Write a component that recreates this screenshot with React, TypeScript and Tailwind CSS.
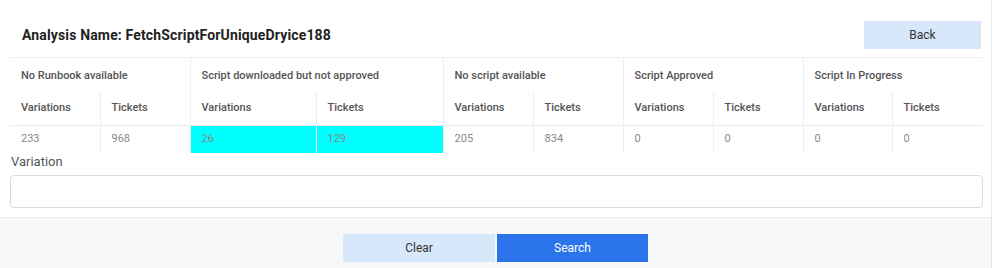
import React from 'react';

type Group = { title: string; variations: number; tickets: number; highlight?: boolean };

const groups: Group[] = [
  { title: 'No Runbook available', variations: 233, tickets: 968 },
  { title: 'Script downloaded but not approved', variations: 26, tickets: 129, highlight: true },
  { title: 'No script available', variations: 205, tickets: 834 },
  { title: 'Script Approved', variations: 0, tickets: 0 },
  { title: 'Script In Progress', variations: 0, tickets: 0 },
];

const colWidths = ['w-[90px]', 'w-[90px]', 'w-[126px]', 'w-[127px]', 'w-[90px]', 'w-[90px]', 'w-[90px]', 'w-[90px]', 'w-[89px]', 'w-[91px]'];

const App: React.FC = () => {
  return (
    <div className="w-[992px] h-[268px] bg-white border-r border-[#e6e8ea] font-['Roboto',sans-serif] flex flex-col overflow-hidden">
      <div className="px-[10px] flex-1">
        <div className="flex items-center justify-between pt-[21px] pb-[8px]">
          <h1 className="pl-[12px] text-[14px] font-bold text-[#222] tracking-[0.15px]">
            Analysis Name: FetchScriptForUniqueDryice188
          </h1>
          <button className="w-[117px] h-[28px] bg-[#d6e8f9] text-[12px] text-[#333]">Back</button>
        </div>

        <table className="w-[973px] border-collapse table-fixed border-t border-[#eceef0]">
          <colgroup>
            {colWidths.map((w, i) => (
              <col key={i} className={w} />
            ))}
          </colgroup>
          <thead>
            <tr className="h-[34px]">
              {groups.map((g, i) => (
                <th
                  key={g.title}
                  colSpan={2}
                  className={`text-left pl-[11px] pt-[2px] text-[11px] font-medium text-[#555] ${i > 0 ? 'border-l border-[#eceef0]' : ''}`}
                >
                  {g.title}
                </th>
              ))}
            </tr>
            <tr className="h-[34px] border-b border-[#e8eaec]">
              {groups.map((g, i) => (
                <React.Fragment key={g.title}>
                  <th className={`text-left pl-[11px] text-[11px] font-medium text-[#555] ${i > 0 ? 'border-l border-[#eceef0]' : ''}`}>
                    Variations
                  </th>
                  <th className="text-left pl-[11px] text-[11px] font-medium text-[#555] border-l border-[#eceef0]">
                    Tickets
                  </th>
                </React.Fragment>
              ))}
            </tr>
          </thead>
          <tbody>
            <tr className="h-[27px]">
              {groups.map((g, i) => (
                <React.Fragment key={g.title}>
                  <td
                    className={`pl-[11px] text-[11px] text-[#888] ${g.highlight ? 'bg-[#00ffff]' : ''} ${i > 0 ? 'border-l border-[#eceef0]' : ''}`}
                  >
                    {g.variations}
                  </td>
                  <td className={`pl-[11px] text-[11px] text-[#888] border-l border-[#eceef0] ${g.highlight ? 'bg-[#00ffff]' : ''}`}>
                    {g.tickets}
                  </td>
                </React.Fragment>
              ))}
            </tr>
          </tbody>
        </table>

        <label className="block pl-[1px] text-[13px] leading-[18px] text-[#555]">Variation</label>
        <input className="mt-[4px] block w-[973px] h-[33px] rounded-[4px] border border-[#d9dcdf] bg-white outline-none px-2 text-[13px]" />
      </div>

      <div className="h-[51px] bg-[#f6f8fa] border-t border-[#eceef0] flex justify-center items-start pt-[16px] gap-[2px] shrink-0">
        <button className="w-[152px] h-[28px] bg-[#d6e8f9] text-[12px] text-[#333]">Clear</button>
        <button className="w-[151px] h-[28px] bg-[#2b73ea] text-[12px] text-white">Search</button>
      </div>
    </div>
  );
};

export default App;
